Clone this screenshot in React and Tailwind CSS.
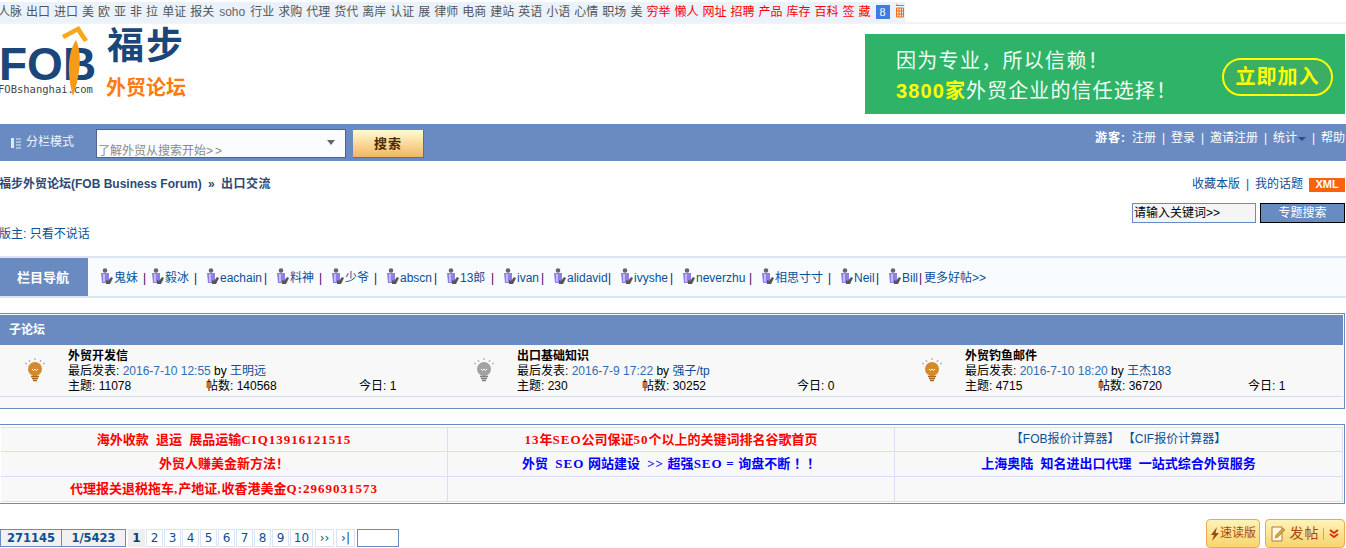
import React from "react";

const NAV_GRAY = [
  "人脉", "出口", "进口", "美", "欧", "亚", "非", "拉", "单证", "报关", "soho", "行业", "求购", "代理", "货代",
  "离岸", "认证", "展", "律师", "电商", "建站", "英语", "小语", "心情", "职场", "美",
];
const NAV_RED = ["穷举", "懒人", "网址", "招聘", "产品", "库存", "百科", "签", "藏"];

const USERS = [
  { name: "鬼妹", w: "w-[51px]", pr: "pr-[5px]" },
  { name: "毅冰", w: "w-[55px]", pr: "pr-[9px]" },
  { name: "eachain", w: "w-[70px]", pr: "pr-[9px]" },
  { name: "料神", w: "w-[55px]", pr: "pr-[9px]" },
  { name: "少爷", w: "w-[55px]", pr: "pr-[9px]" },
  { name: "abscn", w: "w-[60px]", pr: "pr-[9px]" },
  { name: "13郎", w: "w-[57px]", pr: "pr-[9px]" },
  { name: "ivan", w: "w-[50px]", pr: "pr-[9px]" },
  { name: "alidavid", w: "w-[67px]", pr: "pr-[9px]" },
  { name: "ivyshe", w: "w-[62px]", pr: "pr-[9px]" },
  { name: "neverzhu", w: "w-[79px]", pr: "pr-[9px]" },
  { name: "相思寸寸", w: "w-[79px]", pr: "pr-[9px]" },
  { name: "Neil", w: "w-[48px]", pr: "pr-[9px]" },
  { name: "Bill", w: "w-[35px]", pr: "pr-[1px]" },
];

const FORUMS = [
  {
    title: "外贸开发信", date: "2016-7-10 12:55", by: "王明远", lit: true,
    topics: "11078", posts: "140568", today: "1",
    col: "w-[449px] pl-[24px]", shift: "-ml-[14px]", w1: "w-[138px]", w2: "w-[153px]",
  },
  {
    title: "出口基础知识", date: "2016-7-9 17:22", by: "强子/tp", lit: false,
    topics: "230", posts: "30252", today: "0",
    col: "w-[449px] pl-[24px]", shift: "-ml-[15px]", w1: "w-[125px]", w2: "w-[155px]",
  },
  {
    title: "外贸钓鱼邮件", date: "2016-7-10 18:20", by: "王杰183", lit: true,
    topics: "4715", posts: "36720", today: "1",
    col: "flex-1 pl-[23px]", shift: "-ml-[13px]", w1: "w-[133px]", w2: "w-[150px]",
  },
];

const PAGES = ["2", "3", "4", "5", "6", "7", "8", "9"];

const Bulb = ({ lit }) => {
  const c = lit ? "#d5892d" : "#a2a2a2";
  const d = lit ? "#a8651c" : "#808080";
  return (
    <svg width="22" height="24" viewBox="0 0 22 24" className="shrink-0">
      <path d="M1 5l2 1M5 2l1 2M11 0v2M17 2l-1 2M21 5l-2 1" stroke="#999" strokeWidth="1" fill="none" />
      <circle cx="11" cy="11" r="7" fill={c} />
      <path d="M8 11l1.5 1.5L11 11l1.5 1.5L14 11" stroke="#fff" strokeWidth="1" fill="none" />
      <path d="M7 18.500h8M8 20.500h6M9 22.500h4" stroke={d} strokeWidth="1.300" />
    </svg>
  );
};

const UserIcon = () => (
  <svg width="13" height="16" viewBox="0 0 13 16" className="shrink-0">
    <circle cx="5" cy="2.500" r="2.300" fill="#666" />
    <path d="M1 5h8v10H2z" fill="#8f7de8" />
    <path d="M3 6h2v8H3z" fill="#c3b8f8" />
    <path d="M6 12l2 1 3-4 2 1-3 6H6z" fill="#555" />
  </svg>
);

const Person = ({ user }) => (
  <div className={`flex items-center justify-between ${user.w} ${user.pr}`}>
    <span className="flex items-center">
      <span className="-mt-[5px]">
        <UserIcon />
      </span>
      <span className="ml-[1px] text-[#0b4f96]">{user.name}</span>
    </span>
    <span className="text-[#400060]">|</span>
  </div>
);

// latin runs in the ad table are wider than the font gives
const spaced = (text) =>
  text.split(/([A-Za-z0-9:=,>]+)/).map((part, i) =>
    i % 2 ? (
      <span key={i} className="tracking-[1px] [font-family:'Liberation_Serif',serif]">{part}</span>
    ) : (
      part
    ),
  );

const AdCell = ({ text = "", color = "text-[#ff0000]", className = "" }) => (
  <div className={`flex items-center justify-center whitespace-pre text-[13px] font-bold ${color} ${className}`}>
    <span>{spaced(text)}</span>
  </div>
);

const PageBtn = ({ children, className = "w-[17px]" }) => (
  <span className={`flex h-[18px] items-center justify-center border border-[#d9e4f4] text-[#0b4f96] ${className}`}>
    {children}
  </span>
);

const Sep = () => <span className="w-[15px] text-center">|</span>;

export default function App() {
  return (
    <div className="h-[548px] w-[1346px] overflow-hidden bg-white text-[12px] leading-[15px] text-black [font-family:'Liberation_Sans','Noto_Sans_CJK_SC',sans-serif]">
      {/* top links */}
      <div className="flex h-[24px] items-start border-b-[2px] border-[#f3f3f3] pt-[2px]">
        <div className="flex h-[20px] w-[905px] items-center gap-[4px] bg-[#eaf2fb] leading-[18px] text-[#555]">
          <div className="-ml-[2px] flex items-center gap-[4px]">
            {NAV_GRAY.map((t, i) => (
              <span key={i} className={t === "soho" ? "w-[28px] text-center text-[#666]" : ""}>{t}</span>
            ))}
            {NAV_RED.map((t) => (
              <span key={t} className="text-[#ff0000]">{t}</span>
            ))}
          </div>
          <span className="ml-[1px] flex h-[14px] w-[14px] items-center justify-center bg-[#3f7be0] text-[12px] text-white [font-family:'Liberation_Serif',serif]">8</span>
          <svg width="10" height="15" viewBox="0 0 10 15" className="ml-[1px] -mt-[3px]">
            <path d="M1 2.500h8M1.500 5h7v9h-7zM1.500 8h7M1.500 11h7M4 5v9M6.500 5v9M2 1v2" stroke="#f26a10" strokeWidth="1" fill="none" />
          </svg>
        </div>
      </div>

      {/* logo row */}
      <div className="flex h-[100px] justify-between pr-[1px]">
        <div className="flex">
          <div className="relative w-[107px]">
            <div className="-ml-[1px] mt-[23px] text-[46px] font-bold leading-[34px] text-[#1b4679]">FOB</div>
            <div className="-ml-[2px] mt-[2px] text-[10.500px] leading-[12px] text-[#444] [font-family:'DejaVu_Sans_Mono',monospace]">
              FOBshanghai.com
            </div>
            <svg width="30" height="72" viewBox="0 0 30 72" className="absolute left-[59px] top-[1px]">
              <path d="M3 10L20 1l9 14-4 2-7-10-13 7z" fill="#f7a81b" />
              <path d="M17 15c5 10 6 30 -3 56C9 55 7 30 17 15z" fill="#f79a1c" />
            </svg>
          </div>
          <div className="flex flex-col">
            <div className="mt-[2px] text-[37px] font-bold leading-[42px] tracking-[2px] text-[#1b4679]">福步</div>
            <div className="-ml-[1px] mt-[8px] text-[20px] font-bold leading-[24px] text-[#ff7a10]">外贸论坛</div>
          </div>
        </div>
        <div className="mt-[10px] flex h-[80px] w-[480px] items-center justify-between bg-[#2fb368] pl-[31px] pr-[12px] text-[20px] leading-[30px] text-[#f2fff5]">
          <div className="mt-[4px]">
            <div className="tracking-[1.300px]">因为专业，所以信赖！</div>
            <div className="tracking-[1.100px]">
              <span className="font-bold text-[#ffff00]">3800家</span>外贸企业的信任选择！
            </div>
          </div>
          <div className="mt-[6px] flex h-[38px] w-[111px] items-center justify-center rounded-full border-[2px] border-[#ffff00] bg-[#3cae64] text-[20px] font-bold tracking-[1px] text-[#ffff00]">
            立即加入
          </div>
        </div>
      </div>

      {/* blue bar */}
      <div className="flex h-[37px] items-start justify-between bg-[#6a8bc1] text-white">
        <div className="flex items-start">
          <div className="ml-[10px] mt-[11px] flex w-[86px] items-center gap-[4px] text-[#eef3fb]">
            <svg width="12" height="12" viewBox="0 0 12 12" className="shrink-0">
              <path d="M1 1h3v10H1z" fill="#dfe8f6" />
              <path d="M6 2h5M6 5h5M6 8h5M6 11h5" stroke="#dfe8f6" strokeWidth="1" />
            </svg>
            <span className="whitespace-nowrap">分栏模式</span>
          </div>
          <div className="mt-[5px] flex h-[29px] w-[250px] items-end justify-between border border-[#4c6590] bg-[#fbfcff] pl-[1px] pr-[10px] text-[#8a8a8a]">
            <span className="-mb-[2px]">
              了解外贸从搜索开始<span className="tracking-[2px]">&gt;&gt;</span>
            </span>
            <span className="mb-[12px] h-0 w-0 border-x-[4px] border-t-[5px] border-x-transparent border-t-[#666]" />
          </div>
          <div className="ml-[7px] mt-[6px] flex h-[28px] w-[71px] items-center justify-center border-b border-r border-[#5a6f92] bg-gradient-to-b from-[#fffcd2] to-[#f1b660] text-[13px] font-bold tracking-[1px] text-[#4a2a00]">
            搜索
          </div>
        </div>
        <div className="mt-[6px] flex items-center pr-[1px] pt-[1px]">
          <span className="mr-[6px] font-bold tracking-[1px]">游客:</span>
          <span>注册</span>
          <Sep />
          <span>登录</span>
          <Sep />
          <span>邀请注册</span>
          <Sep />
          <span>统计</span>
          <span className="ml-[1px] mt-[1px] h-0 w-0 border-x-[4px] border-t-[4px] border-x-transparent border-t-[#234f96]" />
          <Sep />
          <span>帮助</span>
        </div>
      </div>

      {/* breadcrumb */}
      <div className="flex h-[42px] items-start justify-between pr-[1px] pt-[16px]">
        <div className="-ml-[1px] font-bold text-[#2c4a75]">
          福步外贸论坛(FOB Business Forum)
          <span className="mx-[3px]"> » </span>
          <span className="tracking-[0.500px]">出口交流</span>
        </div>
        <div className="flex items-center text-[#0b4f96]">
          <span>收藏本版</span>
          <Sep />
          <span>我的话题</span>
          <span className="ml-[6px] flex h-[14px] w-[36px] items-center justify-center bg-[#f8620c] text-[11px] font-bold leading-none text-white">
            XML
          </span>
        </div>
      </div>

      {/* thread search */}
      <div className="flex h-[20px] justify-end gap-[4px] pr-[1px]">
        <div className="flex w-[124px] items-center border border-[#6a8bc1] bg-[#f5f5f5] pl-[1px]">
          请输入关键词&gt;&gt;
        </div>
        <div className="flex w-[85px] items-center justify-center border border-black bg-[#6a8bc1] text-white">
          专题搜索
        </div>
      </div>

      {/* moderator */}
      <div className="mt-[3px] h-[30px] -ml-[1px] pt-[1px] leading-[14px] text-[#0b4f96]">版主: 只看不说话</div>

      {/* user nav */}
      <div className="flex h-[42px] items-center border-y-[2px] border-[#dde5f2] bg-[#f8fcff]">
        <div className="flex h-full w-[88px] items-center justify-center bg-[#6a8bc1] pr-[2px] text-[13px] font-bold text-white">栏目导航</div>
        <div className="ml-[12px] mt-[2px] flex items-center text-[#0b4f96]">
          {USERS.map((u) => (
            <Person key={u.name} user={u} />
          ))}
          <span className="ml-[1px]">更多好帖&gt;&gt;</span>
        </div>
      </div>

      {/* sub forums */}
      <div className="-ml-[1px] mr-[1px] mt-[15px] h-[96px] border border-[#6a8bc1] bg-[#f8f8f8] pr-[1px]">
        <div className="mt-[1px] flex h-[30px] items-center bg-[#6a8bc1] pl-[9px] font-bold text-white">子论坛</div>
        <div className="flex h-[52px] border-b border-[#d4e0ec] pt-[4px]">
          {FORUMS.map((f) => (
            <div key={f.title} className={`flex items-start ${f.col}`}>
              <div className="mt-[9px] w-[35px] shrink-0">
                <Bulb lit={f.lit} />
              </div>
              <div className={`${f.shift} ml-[9px] flex-1`}>
                <div className="font-bold">{f.title}</div>
                <div>
                  最后发表: <span className="text-[#2f6db5]">{f.date}</span> by <span className="text-[#0b4f96]">{f.by}</span>
                </div>
                <div className="flex">
                  <span className={f.w1}>主题: {f.topics}</span>
                  <span className={f.w2}>帖数: {f.posts}</span>
                  <span>今日: {f.today}</span>
                </div>
              </div>
            </div>
          ))}
        </div>
      </div>

      {/* ad table */}
      <div className="-ml-[1px] mr-[1px] mt-[15px] h-[80px] border border-[#6a8bc1] p-[1px] pt-[2px]">
        <div className="grid h-full grid-cols-[447px_447px_1fr] grid-rows-3 border-y border-[#d6e2f3] bg-[#f8f8f8] [&>div]:border-[#d6e2f3]">
          <AdCell className="border-b border-r" text={"海外收款  退运  展品运输CIQ13916121515"} />
          <AdCell className="border-b border-r" text="13年SEO公司保证50个以上的关键词排名谷歌首页" />
          <div className="flex items-center justify-center whitespace-pre border-b border-r text-[#0b4f96]">【FOB报价计算器】 【CIF报价计算器】</div>
          <AdCell className="border-b border-r" text="外贸人赚美金新方法！" />
          <AdCell className="border-b border-r" color="text-[#0000ff]" text={"外贸  SEO 网站建设  >> 超强SEO = 询盘不断 ！！"} />
          <AdCell className="border-b border-r" color="text-[#0000ff]" text={"上海奥陆  知名进出口代理  一站式综合外贸服务"} />
          <AdCell className="border-r" text="代理报关退税拖车,产地证,收香港美金Q:2969031573" />
          <AdCell className="border-r" />
          <AdCell className="border-r" />
        </div>
      </div>

      {/* pagination */}
      <div className="mt-[15px] flex items-end justify-between pr-[1px]">
        <div className="mb-[1px] flex items-center gap-[1px] text-[12px] [font-family:'DejaVu_Sans','Noto_Sans_CJK_SC',sans-serif]">
          <span className="flex h-[18px] w-[62px] items-center justify-center border border-[#6a8bc1] bg-[#f1f1f1] text-[11.500px] font-bold text-[#0b4f96]">271145</span>
          <span className="-ml-[2px] mr-[1px] flex h-[18px] w-[65px] items-center justify-center border border-[#6a8bc1] bg-[#f1f1f1] text-[11.500px] font-bold text-[#0b4f96]">1/5423</span>
          <span className="flex h-[18px] w-[17px] items-center justify-center bg-[#eeeeee] font-bold text-[#0b3f76]">1</span>
          {PAGES.map((p) => (
            <PageBtn key={p}>{p}</PageBtn>
          ))}
          <PageBtn className="w-[23px]">10</PageBtn>
          <PageBtn className="ml-[1px] w-[19px]">››</PageBtn>
          <PageBtn className="ml-[1px] w-[19px]">›|</PageBtn>
          <span className="ml-[1px] h-[18px] w-[42px] border border-[#6a8bc1] bg-white" />
        </div>
        <div className="flex items-end gap-[5px] text-[#a8480c]">
          <div className="flex h-[29px] w-[54px] items-center justify-center rounded-[4px] border border-[#eda950] bg-gradient-to-b from-[#fff3b8] to-[#f8d56c]">
            <svg width="10" height="14" viewBox="0 0 10 14" className="shrink-0">
              <path d="M7 0L1 8h3l-2 6 7-8H5.500z" fill="#9a4a10" />
            </svg>
            <span>速读版</span>
          </div>
          <div className="flex h-[29px] w-[80px] items-center justify-between rounded-[4px] border border-[#eda950] bg-gradient-to-b from-[#fff3b8] to-[#f8d56c] pl-[5px] pr-[5px]">
            <svg width="15" height="16" viewBox="0 0 15 16" className="shrink-0">
              <path d="M1 1h10v14H1z" fill="#fff8e0" stroke="#b5763a" />
              <path d="M4 12l1-3 7-7 2 2-7 7z" fill="#d9a23c" stroke="#9a6a1c" strokeWidth="0.500" />
            </svg>
            <span className="shrink-0 whitespace-nowrap text-[14px] tracking-[1px]">发帖</span>
            <span className="flex items-center border-l border-[#d7a848] pl-[5px]">
              <svg width="10" height="12" viewBox="0 0 10 12">
                <path d="M1 2l4 3 4-3M1 6l4 3 4-3" stroke="#e03010" strokeWidth="2" fill="none" />
              </svg>
            </span>
          </div>
        </div>
      </div>
    </div>
  );
}
